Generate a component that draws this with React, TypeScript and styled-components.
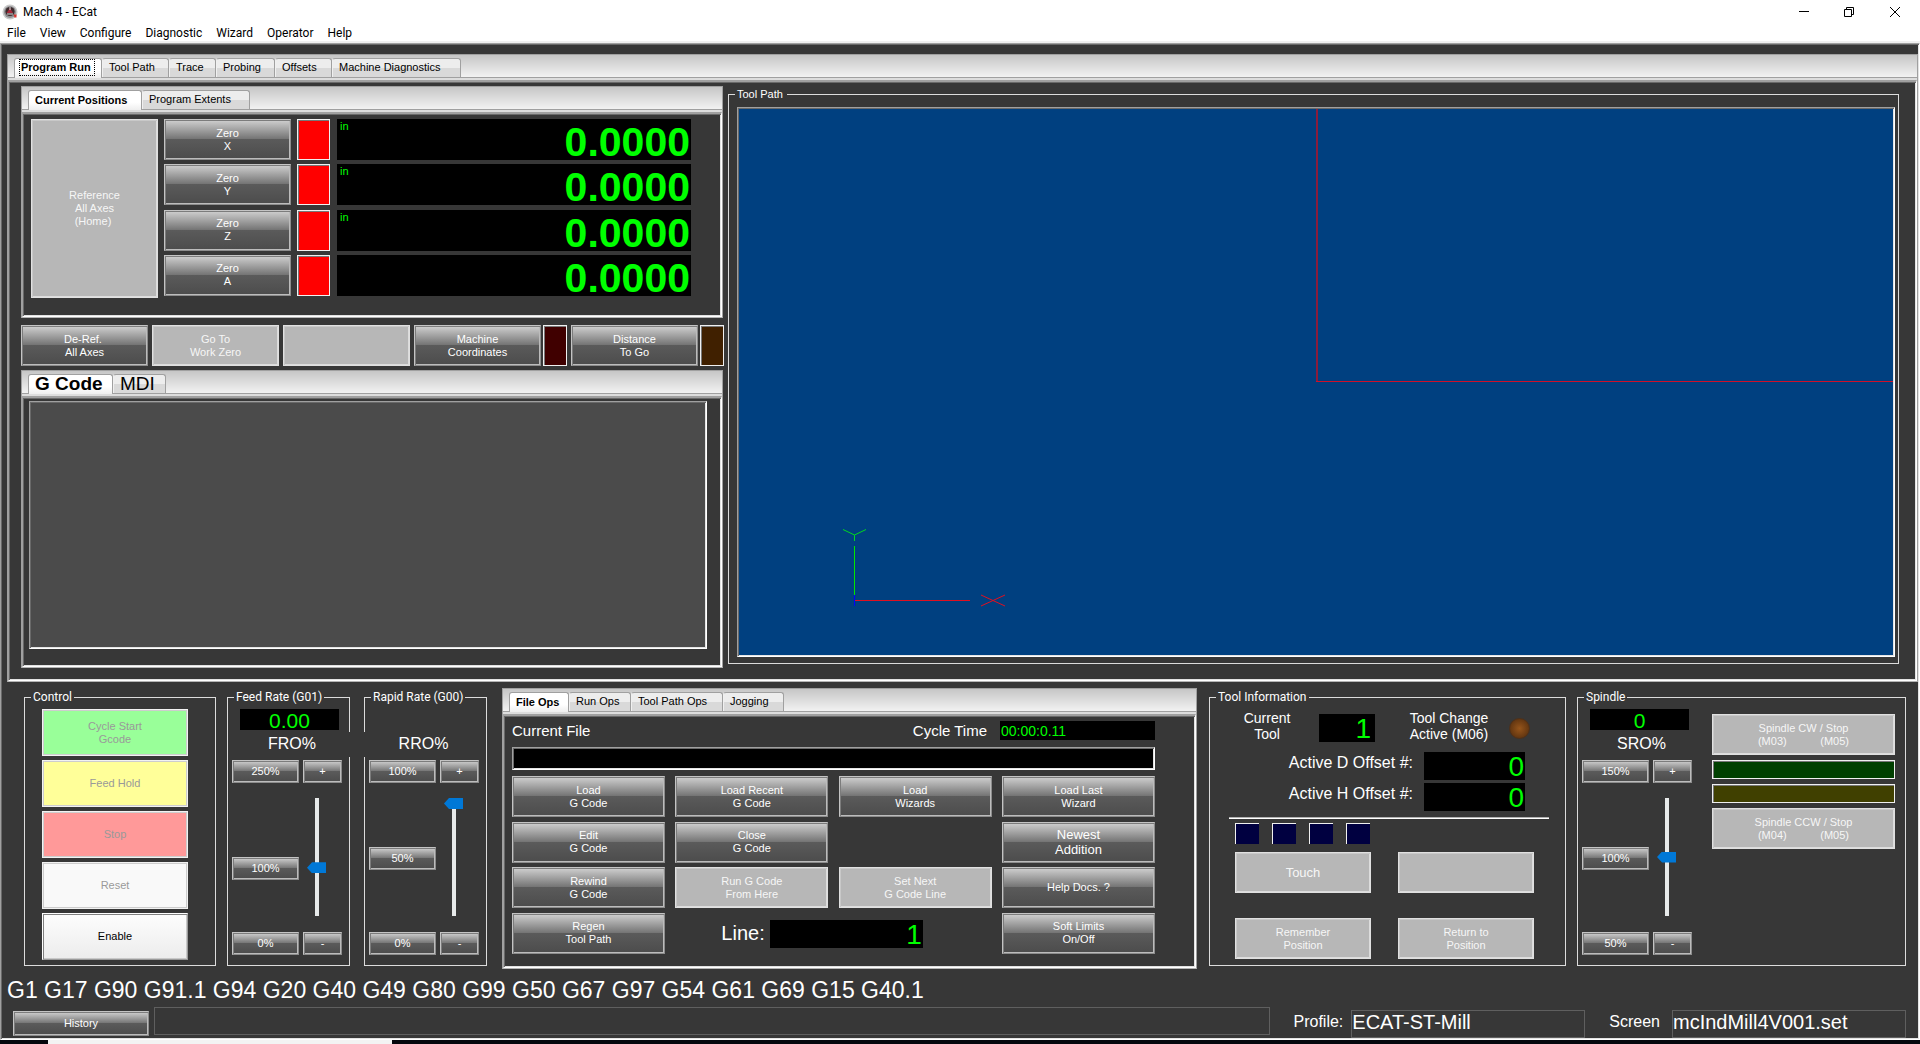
import React from 'react';
import styled, { createGlobalStyle, css } from 'styled-components';

const UI = '"Liberation Sans", Arial, sans-serif';
const SYS = 'Roboto, "Segoe UI", sans-serif';

const GlobalStyle = createGlobalStyle`
  *, *::before, *::after { box-sizing: border-box; }
  html, body { margin: 0; padding: 0; background: #fff; }
  button, input, output, legend { font-family: inherit; }
`;

const sunken = css`
  border: 1px solid;
  border-color: #a0a0a0 #fff #fff #a0a0a0;
  box-shadow: inset 1px 1px #696969, inset -1px -1px #e3e3e3;
`;

/* ---------- window frame ---------- */

const Window = styled.div`
  display: flex;
  flex-direction: column;
  min-height: 100vh;
  font-family: ${UI};
  font-size: 11px;
  color: #fff;
`;

const TitleBar = styled.header`
  display: flex;
  align-items: center;
  gap: 5px;
  height: 20px;
  padding: 4px 19px 0 2px;
  color: #000;
  font: 12px/16px ${SYS};
`;

const Title = styled.h1`
  flex: 1;
  margin: 0;
  font: inherit;
`;

const WindowButtons = styled.div`
  display: flex;
  gap: 33px;
`;

const CaptionButton = styled.button`
  width: 12px;
  height: 12px;
  padding: 0;
  border: 0;
  background: none;
  svg { display: block; }
`;

const MenuBar = styled.nav`
  display: flex;
  gap: 14px;
  height: 23px;
  padding: 4px 7px 0;
  border-bottom: 2px solid #f0f0f0;
`;

const MenuItem = styled.button`
  padding: 0;
  border: 0;
  background: none;
  color: #000;
  font: 12px/18px ${SYS};
`;

const Client = styled.main`
  ${sunken}
  flex: 1;
  display: flex;
  flex-direction: column;
  padding: 10px 1px 1px 6px;
  background: #373737;
`;

const Taskbar = styled.div`
  height: 4px;
  background: linear-gradient(90deg, #05060d 48px, #f3f3f3 48px 392px, #05060d 392px);
`;

/* ---------- notebook (tabbed panel) ---------- */

const NotebookBox = styled.section<{ $grow?: boolean }>`
  flex: ${p => (p.$grow ? '1 1 0' : '0 0 auto')};
  display: flex;
  flex-direction: column;
  min-width: 0;
  border: 1px solid #a0a0a0;
  border-bottom-color: #b4b4b4;
  background: #ddd;
`;

const TabList = styled.div`
  display: flex;
  align-items: flex-end;
  height: 23px;
  padding-left: 6px;
  border-bottom: 1px solid #a0a0a0;
  background: linear-gradient(#c6c6c6, #f2f2f2);
`;

const TabButton = styled.button<{ $active: boolean; $width: number; $large?: boolean }>`
  width: ${p => p.$width}px;
  height: 19px;
  padding: 0 0 2px 6px;
  border: 1px solid #a0a0a0;
  border-left-color: ${p => (p.$active ? '#a0a0a0' : '#f0f0f0')};
  border-bottom: 0;
  border-radius: 3px 3px 0 0;
  background: ${p =>
    p.$active ? 'linear-gradient(#fff 60%, #eee)' : 'linear-gradient(#ededed 50%, #d9d9d9 50%)'};
  color: #000;
  text-align: left;
  white-space: nowrap;
  font-size: ${p => (p.$large ? 19 : 11)}px;
  line-height: ${p => (p.$large ? 17 : 16)}px;
  font-weight: ${p => (p.$active ? 700 : 400)};
  margin-bottom: ${p => (p.$active ? -1 : 0)}px;
  ${p => p.$active && 'height: 20px; padding-bottom: 2px;'}
  &.focused { padding-left: 4px; }
  &.focused span { display: block; width: 76px; height: 17px; padding-left: 1px; border: 1px dotted #000; line-height: 15px; }
`;

const NotebookBody = styled.div`
  flex: 1;
  display: flex;
  flex-direction: column;
  margin-top: 2px;
  padding: 1px;
  border: solid;
  border-width: 2px 1px 1px;
  border-color: #a0a0a0 #fff #fff #a0a0a0;
  box-shadow: inset 1px 1px #696969, inset -1px -1px #e3e3e3;
  background: #373737;
`;

type TabDef = [label: string, width: number];

function Notebook(props: {
  tabs: TabDef[];
  label: string;
  grow?: boolean;
  large?: boolean;
  focused?: boolean;
  children: React.ReactNode;
}) {
  return (
    <NotebookBox $grow={props.grow} aria-label={props.label}>
      <TabList role="tablist">
        {props.tabs.map(([name, width], i) => (
          <TabButton
            key={name}
            role="tab"
            aria-selected={i === 0}
            $active={i === 0}
            $width={width}
            $large={props.large}
            className={props.focused && i === 0 ? 'focused' : undefined}
          >
            <span>{name}</span>
          </TabButton>
        ))}
      </TabList>
      <NotebookBody role="tabpanel">{props.children}</NotebookBody>
    </NotebookBox>
  );
}

/* ---------- shared controls ---------- */

const PushButton = styled.button<{ $w?: number; $h?: number; $large?: boolean }>`
  width: ${p => (p.$w ? `${p.$w}px` : '100%')};
  height: ${p => p.$h ?? 41}px;
  flex: none;
  padding: 0;
  border: 1px solid;
  border-color: #c4c4c4 #8c8c8c #8c8c8c #c4c4c4;
  box-shadow: inset 1px 1px #7c7c7c, inset -1px -1px #bcbcbc;
  background: linear-gradient(#d0d0d0, #757575 48%, #5b5b5b 48%, #4c4c4c);
  color: #fff;
  font-size: ${p => (p.$large ? 13 : 11)}px;
  line-height: ${p => (p.$large ? 15 : 13)}px;
  text-align: center;
  white-space: pre;
  &:disabled {
    border-color: #e0e0e0;
    box-shadow: inset 1px 1px #c8c8c8, inset -1px -1px #dcdcdc;
    background: #b7b7b7;
    color: #f6f6f6;
  }
`;

const ControlButton = styled(PushButton)<{ $tint: string }>`
  width: 146px;
  height: 47px;
  color: #000;
  border-color: #fff #9a9a9a #9a9a9a #fff;
  box-shadow: inset 1px 1px #808080, inset -1px -1px #c8c8c8;
  background: ${p => p.$tint};
  &:disabled {
    border-color: #f2f2f2;
    box-shadow: inset 1px 1px #cdcdcd, inset -1px -1px #cdcdcd;
    background: ${p => p.$tint};
    color: #999;
  }
`;

const Lamp = styled.span<{ $color: string; $w?: number; $h: number }>`
  flex: none;
  width: ${p => (p.$w ? `${p.$w}px` : '100%')};
  height: ${p => p.$h}px;
  border: 1px solid #f0f0f0;
  box-shadow: inset 1px 1px #777;
  background: ${p => p.$color};
`;

const Readout = styled.output<{ $w: number; $h: number; $size: number; $align?: string }>`
  display: block;
  flex: none;
  width: ${p => p.$w}px;
  height: ${p => p.$h}px;
  padding: 0 1px;
  background: #000;
  color: #0f0;
  font-size: ${p => p.$size}px;
  line-height: ${p => p.$h + 2}px;
  text-align: ${p => p.$align ?? 'right'};
`;

const Group = styled.fieldset<{ $w?: number }>`
  flex: none;
  width: ${p => (p.$w ? `${p.$w}px` : 'auto')};
  min-width: 0;
  margin: 2px 0 3px;
  padding: 4px 0 0;
  border: 1px solid #dcdcdc;
`;

const Legend = styled.legend`
  margin-left: 6px;
  padding: 0 2px;
  font: 12px/15px ${SYS};
`;

/* ---------- program run page ---------- */

const RunPage = styled.div`
  flex: 1;
  display: flex;
  gap: 5px;
  padding: 3px 16px 11px 11px;
`;

const LeftColumn = styled.div`
  flex: none;
  width: 702px;
  display: flex;
  flex-direction: column;
`;

const Positions = styled.div`
  display: flex;
  gap: 6px;
  padding: 4px 0 17px 7px;
`;

const AxisList = styled.div`
  display: flex;
  flex-direction: column;
  justify-content: space-between;
  padding-bottom: 2px;
`;

const AxisRow = styled.div`
  display: flex;
  gap: 6px;
`;

const Dro = styled.div`
  display: flex;
  justify-content: space-between;
  width: 354px;
  height: 41px;
  margin-left: 1px;
  padding: 0 1px 0 3px;
  background: #000;
  color: #0f0;
  line-height: 14px;
`;

const DroValue = styled.output`
  font-size: 41px;
  line-height: 46px;
  font-weight: 700;
`;

const ActionRow = styled.div`
  display: flex;
  gap: 4px;
  margin: 7px -2px 4px 0;
`;

const LampPair = styled.div`
  display: flex;
  gap: 2px;
`;

const CodeList = styled.textarea`
  ${sunken}
  display: block;
  flex: 1;
  margin: 2px 13px 16px 5px;
  border-radius: 0;
  background: #4b4b4b;
  color: #fff;
  resize: none;
  outline: 0;
`;

const PathGroup = styled(Group)`
  flex: 1;
  display: flex;
  margin: 1px 0 4px;
  padding: 6px 3px 6px 8px;
`;

const PathLegend = styled(Legend)`
  margin-left: -2px;
  padding: 0 4px 0 2px;
  font: 11px/14px ${UI};
`;

const Viewport = styled.div`
  ${sunken}
  flex: 1;
  padding: 1px;
  background: #004080;
  overflow: hidden;
  display: flex;
`;

const Scene = styled.svg`
  flex: 1;
  display: block;
  min-width: 0;
`;

/* ---------- lower panels ---------- */

const Panels = styled.div`
  display: flex;
  gap: 11px;
  padding: 6px 12px 0 17px;
`;

const ControlStack = styled.div`
  display: flex;
  flex-direction: column;
  gap: 4px;
  padding: 0 0 5px 17px;
`;

const RatePair = styled.div`
  display: flex;
  gap: 14px;
  margin-right: 4px;
`;

const ToolGroup = styled(Group)`
  margin-left: 1px;
`;

const RateColumn = styled.div`
  flex: none;
  width: 121px;
`;

const RateReadoutSlot = styled.div`
  height: 21px;
  padding-left: 12px;
`;

const RateName = styled.label<{ $side: 'left' | 'right' | 'none' }>`
  display: block;
  height: 25px;
  margin: 2px ${p => (p.$side === 'right' ? -1 : 0)}px 3px ${p => (p.$side === 'left' ? -1 : 0)}px;
  padding: ${p => (p.$side === 'left' ? '0 3px 0 0' : '0 0 0 6px')};
  background: #373737;
  font-size: 16px;
  line-height: 23px;
  text-align: center;
`;

const RateGrid = styled.div`
  display: grid;
  grid-template-columns: 67px 39px;
  column-gap: 4px;
  padding-left: 4px;
`;

const SliderRow = styled(RateGrid)<{ $shift: number }>`
  padding: 15px 0 16px 4px;
  align-items: center;
  button { margin-top: ${p => p.$shift}px; }
`;

const Slider = styled.input`
  appearance: none;
  writing-mode: vertical-lr;
  direction: rtl;
  width: 19px;
  height: 118px;
  margin: 0 0 0 4px;
  background: linear-gradient(#e7eaea, #e7eaea) center / 4px 100% no-repeat;
  &::-webkit-slider-thumb {
    appearance: none;
    width: 19px;
    height: 11px;
    background: #0078d7;
    clip-path: polygon(0 50%, 5px 0, 100% 0, 100% 100%, 5px 100%);
  }
`;

function Rate(props: {
  id: string;
  name: string;
  value?: string;
  side: 'left' | 'right' | 'none';
  marks: [string, string, string];
  min: number;
  max: number;
  now: number;
  shift?: number;
}) {
  const [top, mid, low] = props.marks;
  return (
    <RateColumn>
      <RateReadoutSlot>
        {props.value && <Readout $w={99} $h={21} $size={21} $align="center">{props.value}</Readout>}
      </RateReadoutSlot>
      <RateName htmlFor={props.id} $side={props.side}>{props.name}</RateName>
      <RateGrid>
        <PushButton $h={23}>{top}</PushButton>
        <PushButton $h={23}>+</PushButton>
      </RateGrid>
      <SliderRow $shift={props.shift ?? 2}>
        <PushButton $h={23}>{mid}</PushButton>
        <Slider id={props.id} type="range" min={props.min} max={props.max} defaultValue={props.now} />
      </SliderRow>
      <RateGrid>
        <PushButton $h={23}>{low}</PushButton>
        <PushButton $h={23}>-</PushButton>
      </RateGrid>
    </RateColumn>
  );
}

const FilePage = styled.div`
  flex: 1;
  display: flex;
  flex-direction: column;
  padding: 4px 39px 12px 7px;
`;

const FileHeader = styled.div`
  display: flex;
  justify-content: space-between;
  height: 19px;
  font-size: 15px;
  line-height: 19px;
`;

const CycleTime = styled.div`
  display: flex;
  gap: 13px;
`;

const FileField = styled.input`
  ${sunken}
  height: 23px;
  margin: 7px 0 6px;
  padding: 2px 4px;
  border-radius: 0;
  background: #000;
  color: #0f0;
  outline: 0;
`;

const FileGrid = styled.div`
  flex: 1;
  display: grid;
  grid-template-columns: repeat(4, 153px);
  justify-content: space-between;
  align-content: space-between;
`;

const LineCell = styled.div`
  grid-column: 2 / 4;
  display: flex;
  align-items: flex-start;
  gap: 5px;
  padding: 7px 0 0 46px;
  font-size: 20px;
  line-height: 26px;
`;

const ToolTop = styled.div`
  display: flex;
  padding: 5px 0 0 27px;
`;

const ToolCaption = styled.span<{ $w: number; $gap: number }>`
  width: ${p => p.$w}px;
  height: 33px;
  margin: -4px ${p => p.$gap}px 0 0;
  font-size: 14px;
  line-height: 16px;
  text-align: center;
  white-space: pre;
`;

const ToolNumber = styled(Readout)`
  margin-right: 32px;
  padding-right: 4px;
`;

const RoundLamp = styled.span`
  width: 21px;
  height: 21px;
  margin-top: 4px;
  border: 1px solid #4f3018;
  border-radius: 50%;
  background: radial-gradient(#96551b, #6b3b12 60%, #4a2a10);
`;

const Offsets = styled.div`
  display: flex;
  flex-direction: column;
  gap: 3px;
  margin: 9px 40px 6px 0;
`;

const OffsetRow = styled.div`
  display: flex;
  justify-content: flex-end;
  gap: 11px;
  font-size: 16px;
  line-height: 22px;
`;

const Rule = styled.hr`
  height: 2px;
  margin: 0 16px 4px 19px;
  border: 0;
  border-top: 1px solid #b0b0b0;
  background: #fff;
`;

const InputLamps = styled.div`
  display: flex;
  gap: 13px;
  padding-left: 25px;
  span { border-width: 1px 0 0 1px; box-shadow: none; }
`;

const ToolButtons = styled.div`
  display: grid;
  grid-template-columns: 136px 136px;
  gap: 25px 27px;
  padding: 8px 0 0 25px;
`;

const SpindleLayout = styled.div`
  display: flex;
  gap: 13px;
`;

const SpindleButtons = styled.div`
  width: 183px;
  display: flex;
  flex-direction: column;
  gap: 5px;
  padding-top: 5px;
`;

/* ---------- status area ---------- */

const ModalCodes = styled.p`
  margin: 8px 0 3px;
  font-size: 23px;
  line-height: 27px;
`;

const StatusRow = styled.footer`
  display: flex;
  height: 31px;
  padding: 0 12px 0 6px;
`;

const StatusField = styled.input<{ $wide?: boolean }>`
  flex: ${p => (p.$wide ? '1 1 0' : '0 0 234px')};
  align-self: ${p => (p.$wide ? 'flex-start' : 'flex-end')};
  width: 234px;
  height: 28px;
  padding: 0 0 3px;
  border: 1px solid #5f5f5f;
  border-radius: 0;
  background: transparent;
  color: #fff;
  font-size: 20px;
  outline: 0;
`;

const StatusLabel = styled.label<{ $gap: number }>`
  padding: 4px ${p => p.$gap}px 0 24px;
  font-size: 16px;
  line-height: 22px;
`;

const HistorySlot = styled.div`
  padding: 4px 5px 0 0;
`;

/* ---------- drawings ---------- */

function AppIcon() {
  return (
    <svg width="16" height="16" viewBox="0 0 16 16" aria-hidden="true">
      <circle cx="8" cy="8" r="7.5" fill="#c9c9c9" />
      <circle cx="8" cy="8" r="6" fill="#8f8f92" />
      <circle cx="8" cy="7.5" r="4.6" fill="#3d2b2d" />
      <path d="M4.5 9 8 4.2 11 9Z" fill="#a8283a" />
      <path d="M5 10h6M8 3v3" stroke="#ddd" strokeWidth="1" />
      <path d="M11.5 10.5h3v3h-2z" fill="#d8342f" />
    </svg>
  );
}

function ToolPathScene() {
  return (
    <Scene shapeRendering="crispEdges" role="img" aria-label="Tool path view">
      <svg x="50%" overflow="visible">
        <path d="M1 -10V273" stroke="#8a1c3c" strokeWidth="2" fill="none" />
        <path d="M0 272.5H2000" stroke="#d01028" fill="none" />
      </svg>
      <svg y="100%" overflow="visible">
        <path d="M115.5 -109V-60" stroke="#00e800" />
        <g stroke="#00d820" fill="none" shapeRendering="auto">
          <path d="M104 -125.5 115.5 -120 127 -125.5M115.5 -120V-114" />
        </g>
        <path d="M115.5 -60V-49" stroke="#0000ff" />
        <path d="M116 -54.5H231" stroke="#e01020" />
        <g stroke="#e01020" fill="none" shapeRendering="auto">
          <path d="M242 -60 266 -49M242 -49 266 -60" />
        </g>
      </svg>
    </Scene>
  );
}

/* ---------- data ---------- */

const MENUS = ['File', 'View', 'Configure', 'Diagnostic', 'Wizard', 'Operator', 'Help'];

const AXES = [
  { axis: 'X', unit: 'in' },
  { axis: 'Y', unit: 'in' },
  { axis: 'Z', unit: 'in' },
  { axis: 'A', unit: '' },
];

const MODAL = 'G1 G17 G90 G91.1 G94 G20 G40 G49 G80 G99 G50 G67 G97 G54 G61 G69 G15 G40.1';

export default function App() {
  return (
    <Window>
      <GlobalStyle />
      <TitleBar>
        <AppIcon />
        <Title>Mach 4 - ECat</Title>
        <WindowButtons>
          <CaptionButton aria-label="Minimize">
            <svg width="12" height="12"><path d="M0 5.5h10" stroke="#000" /></svg>
          </CaptionButton>
          <CaptionButton aria-label="Restore">
            <svg width="12" height="12" fill="none" stroke="#000">
              <path d="M0.500 3.500h7v7h-7zM2.500 3V1.500h7v7H8" />
            </svg>
          </CaptionButton>
          <CaptionButton aria-label="Close">
            <svg width="12" height="12" stroke="#000"><path d="M1 1l10 10M11 1 1 11" /></svg>
          </CaptionButton>
        </WindowButtons>
      </TitleBar>
      <MenuBar>
        {MENUS.map(m => <MenuItem key={m}>{m}</MenuItem>)}
      </MenuBar>

      <Client>
        <Notebook
          grow
          focused
          label="Screen pages"
          tabs={[['Program Run', 88], ['Tool Path', 67], ['Trace', 47], ['Probing', 59], ['Offsets', 57], ['Machine Diagnostics', 129]]}
        >
          <RunPage>
            <LeftColumn>
              <Notebook label="Positions" tabs={[['Current Positions', 114], ['Program Extents', 108]]}>
                <Positions>
                  <PushButton $w={127} $h={179} disabled>{'Reference\nAll Axes\n(Home) '}</PushButton>
                  <AxisList>
                    {AXES.map(({ axis, unit }) => (
                      <AxisRow key={axis}>
                        <PushButton $w={127}>{`Zero\n${axis}`}</PushButton>
                        <Lamp $color="#f00" $w={33} $h={41} />
                        <Dro>
                          <span>{unit}</span>
                          <DroValue>0.0000</DroValue>
                        </Dro>
                      </AxisRow>
                    ))}
                  </AxisList>
                </Positions>
              </Notebook>

              <ActionRow>
                <PushButton $w={127}>{'De-Ref. \nAll Axes'}</PushButton>
                <PushButton $w={127} disabled>{'Go To\nWork Zero'}</PushButton>
                <PushButton $w={127} disabled aria-label="Unassigned" />
                <LampPair>
                  <PushButton $w={127}>{'Machine\nCoordinates'}</PushButton>
                  <Lamp $color="#400000" $w={24} $h={41} />
                </LampPair>
                <LampPair>
                  <PushButton $w={127}>{'Distance\nTo Go'}</PushButton>
                  <Lamp $color="#402000" $w={24} $h={41} />
                </LampPair>
              </ActionRow>

              <Notebook grow large label="Code" tabs={[['G Code', 85], ['MDI', 53]]}>
                <CodeList readOnly aria-label="G Code" />
              </Notebook>
            </LeftColumn>

            <PathGroup>
              <PathLegend>Tool Path</PathLegend>
              <Viewport><ToolPathScene /></Viewport>
            </PathGroup>
          </RunPage>
        </Notebook>

        <Panels>
          <Group $w={192}>
            <Legend>Control</Legend>
            <ControlStack>
              <ControlButton disabled $tint="#99ff99">{'Cycle Start\nGcode'}</ControlButton>
              <ControlButton disabled $tint="#ffff99">Feed Hold</ControlButton>
              <ControlButton disabled $tint="#ff9999">Stop</ControlButton>
              <ControlButton disabled $tint="#f9f9f9">Reset</ControlButton>
              <ControlButton $tint="linear-gradient(#fdfdfd, #ececec)">Enable</ControlButton>
            </ControlStack>
          </Group>

          <RatePair>
            <Group $w={123}>
              <Legend>Feed Rate (G01)</Legend>
              <Rate id="fro" name="FRO%" value="0.00" side="right" marks={['250%', '100%', '0%']} min={0} max={250} now={100} shift={22} />
            </Group>
            <Group $w={123}>
              <Legend>Rapid Rate (G00)</Legend>
              <Rate id="rro" name="RRO%" side="left" marks={['100%', '50%', '0%']} min={0} max={100} now={100} />
            </Group>
          </RatePair>

          <Notebook grow label="Operations" tabs={[['File Ops', 60], ['Run Ops', 62], ['Tool Path Ops', 92], ['Jogging', 61]]}>
            <FilePage>
              <FileHeader>
                <label htmlFor="file">Current File</label>
                <CycleTime>
                  <span>Cycle Time</span>
                  <Readout $w={155} $h={19} $size={14} $align="left">00:00:0.11</Readout>
                </CycleTime>
              </FileHeader>
              <FileField id="file" readOnly />
              <FileGrid>
                <PushButton>{'Load\nG Code'}</PushButton>
                <PushButton>{'Load Recent\nG Code'}</PushButton>
                <PushButton>{'Load\nWizards'}</PushButton>
                <PushButton>{'Load Last\nWizard'}</PushButton>
                <PushButton>{'Edit\nG Code'}</PushButton>
                <PushButton>{'Close\nG Code'}</PushButton>
                <span />
                <PushButton $large>{'Newest\nAddition'}</PushButton>
                <PushButton>{'Rewind\nG Code'}</PushButton>
                <PushButton disabled>{'Run G Code\nFrom Here'}</PushButton>
                <PushButton disabled>{'Set Next\nG Code Line'}</PushButton>
                <PushButton>Help Docs. ?</PushButton>
                <PushButton>{'Regen\nTool Path'}</PushButton>
                <LineCell>
                  <span>Line:</span>
                  <Readout $w={153} $h={28} $size={28}>1</Readout>
                </LineCell>
                <PushButton>{'Soft Limits\nOn/Off'}</PushButton>
              </FileGrid>
            </FilePage>
          </Notebook>

          <ToolGroup $w={357}>
            <Legend>Tool Information</Legend>
            <ToolTop>
              <ToolCaption $w={60} $gap={22}>{'Current\nTool'}</ToolCaption>
              <ToolNumber $w={56} $h={28} $size={28}>1</ToolNumber>
              <ToolCaption $w={84} $gap={18}>{'Tool Change\nActive (M06)'}</ToolCaption>
              <RoundLamp />
            </ToolTop>
            <Offsets>
              <OffsetRow>
                <span>Active D Offset #:</span>
                <Readout $w={101} $h={28} $size={28}>0</Readout>
              </OffsetRow>
              <OffsetRow>
                <span>Active H Offset #:</span>
                <Readout $w={101} $h={28} $size={28}>0</Readout>
              </OffsetRow>
            </Offsets>
            <Rule />
            <InputLamps>
              {[0, 1, 2, 3].map(i => <Lamp key={i} $color="#000040" $w={24} $h={21} />)}
            </InputLamps>
            <ToolButtons>
              <PushButton $large disabled>Touch</PushButton>
              <PushButton disabled aria-label="Unassigned" />
              <PushButton disabled>{'Remember\nPosition'}</PushButton>
              <PushButton disabled>{'Return to\nPosition'}</PushButton>
            </ToolButtons>
          </ToolGroup>

          <Group $w={329}>
            <Legend>Spindle</Legend>
            <SpindleLayout>
              <Rate id="sro" name="SRO%" value="0" side="none" marks={['150%', '100%', '50%']} min={50} max={150} now={100} />
              <SpindleButtons>
                <PushButton disabled>{'Spindle CW / Stop\n(M03)           (M05)'}</PushButton>
                <Lamp $color="#004000" $h={19} />
                <Lamp $color="#404000" $h={19} />
                <PushButton disabled>{'Spindle CCW / Stop\n(M04)           (M05)'}</PushButton>
              </SpindleButtons>
            </SpindleLayout>
          </Group>
        </Panels>

        <ModalCodes>{MODAL}</ModalCodes>

        <StatusRow>
          <HistorySlot>
            <PushButton $w={136} $h={25}>History</PushButton>
          </HistorySlot>
          <StatusField $wide readOnly aria-label="Message" />
          <StatusLabel htmlFor="profile" $gap={8}>Profile:</StatusLabel>
          <StatusField id="profile" readOnly value="ECAT-ST-Mill" />
          <StatusLabel htmlFor="screen" $gap={12}>Screen</StatusLabel>
          <StatusField id="screen" readOnly value="mcIndMill4V001.set" />
        </StatusRow>
      </Client>
      <Taskbar />
    </Window>
  );
}
